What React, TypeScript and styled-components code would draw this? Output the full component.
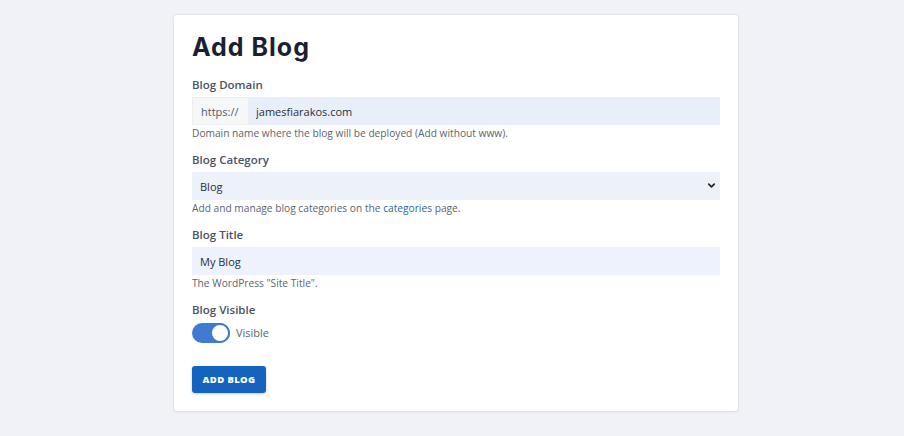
import React from "react";
import styled, { createGlobalStyle } from "styled-components";
import { ChevronDown } from "lucide-react";

const GlobalStyle = createGlobalStyle`
  body {
    margin: 0;
    background: #f1f2f7;
    font-family: "Open Sans", "Noto Sans", sans-serif;
  }
`;

const Page = styled.div`
  display: flex;
  justify-content: center;
  padding: 14px 0 24px 0;
`;

const Card = styled.div`
  width: 528px;
  padding: 14px 18px 18px 18px;
  background: #ffffff;
  border: 1px solid #e3e5ec;
  border-radius: 4px;
  box-shadow: 0 1px 2px rgba(20, 30, 60, 0.05);
  margin-left: 8px;
`;

const Heading = styled.h1`
  margin: 0 0 12px 0;
  font-family: "Inter", "Lato", sans-serif;
  font-weight: 700;
  font-size: 25px;
  line-height: 36px;
  letter-spacing: 1px;
  color: #1b1f33;
`;

const Group = styled.div`
  margin-bottom: 11px;
`;

const Label = styled.div`
  font-size: 11.5px;
  font-weight: 600;
  line-height: 16px;
  color: #4a5366;
  margin-bottom: 4px;
`;

const InputRow = styled.div`
  display: flex;
  height: 28px;
`;

const Prefix = styled.div`
  display: flex;
  align-items: center;
  padding: 0 8px;
  width: 39px;
  background: #f6f7f9;
  border: 1px solid #eceef2;
  border-right: none;
  font-size: 11px;
  color: #555b66;
`;

const TextInput = styled.input<{ $tint?: string }>`
  flex: 1;
  height: 28px;
  box-sizing: border-box;
  border: none;
  outline: none;
  padding: 0 8px;
  background: ${(p) => p.$tint || "#e8effb"};
  font-family: "Open Sans", sans-serif;
  font-size: 11px;
  color: #2a2f3a;
`;

const SelectWrap = styled.div`
  position: relative;
  height: 28px;
`;

const Select = styled.select`
  width: 100%;
  height: 28px;
  appearance: none;
  border: none;
  outline: none;
  padding: 0 8px;
  background: #edf1fa;
  font-family: "Open Sans", sans-serif;
  font-size: 11px;
  color: #2a2f3a;
`;

const Chevron = styled.span`
  position: absolute;
  right: 3px;
  top: 8px;
  display: flex;
  color: #222;
  pointer-events: none;
`;

const Help = styled.div`
  font-size: 10.2px;
  line-height: 16px;
  color: #5b6370;
`;

const Link = styled.a`
  color: #2c64a8;
  text-decoration: none;
`;

const ToggleRow = styled.div`
  display: flex;
  align-items: center;
  gap: 6px;
  height: 21px;
`;

const Track = styled.div<{ $on: boolean }>`
  position: relative;
  width: 38px;
  height: 20px;
  border-radius: 10px;
  background: ${(p) => (p.$on ? "#3f7bd0" : "#c7ccd6")};
`;

const Knob = styled.div<{ $on: boolean }>`
  position: absolute;
  top: 0;
  left: ${(p) => (p.$on ? "18px" : "0")};
  width: 16px;
  height: 16px;
  border-radius: 50%;
  background: #ffffff;
  border: 2px solid #3f7bd0;
`;

const ToggleText = styled.span`
  font-size: 11px;
  color: #5b6370;
`;

const Button = styled.button`
  margin-top: 12px;
  width: 74px;
  height: 27px;
  border: none;
  border-radius: 3px;
  background: #1464bf;
  color: #ffffff;
  font-family: "Open Sans", sans-serif;
  font-size: 9.5px;
  font-weight: 800;
  letter-spacing: 0.4px;
  box-shadow: 0 1px 3px rgba(20, 60, 120, 0.25);
`;

export default function App(): React.ReactElement {
  return (
    <>
      <GlobalStyle />
      <Page>
        <Card>
          <Heading>Add Blog</Heading>
          <Group>
            <Label>Blog Domain</Label>
            <InputRow>
              <Prefix>https://</Prefix>
              <TextInput defaultValue="jamesfiarakos.com" />
            </InputRow>
            <Help>Domain name where the blog will be deployed (Add without www).</Help>
          </Group>
          <Group>
            <Label>Blog Category</Label>
            <SelectWrap>
              <Select defaultValue="Blog">
                <option>Blog</option>
              </Select>
              <Chevron>
                <ChevronDown size={11} strokeWidth={3.5} />
              </Chevron>
            </SelectWrap>
            <Help>
              Add and manage blog categories on the <Link>categories</Link> page.
            </Help>
          </Group>
          <Group>
            <Label>Blog Title</Label>
            <TextInput $tint="#edf2fc" defaultValue="My Blog" style={{ width: "100%" }} />
            <Help>The WordPress "Site Title".</Help>
          </Group>
          <Group>
            <Label>Blog Visible</Label>
            <ToggleRow>
              <Track $on>
                <Knob $on />
              </Track>
              <ToggleText>Visible</ToggleText>
            </ToggleRow>
          </Group>
          <Button>ADD BLOG</Button>
        </Card>
      </Page>
    </>
  );
}
